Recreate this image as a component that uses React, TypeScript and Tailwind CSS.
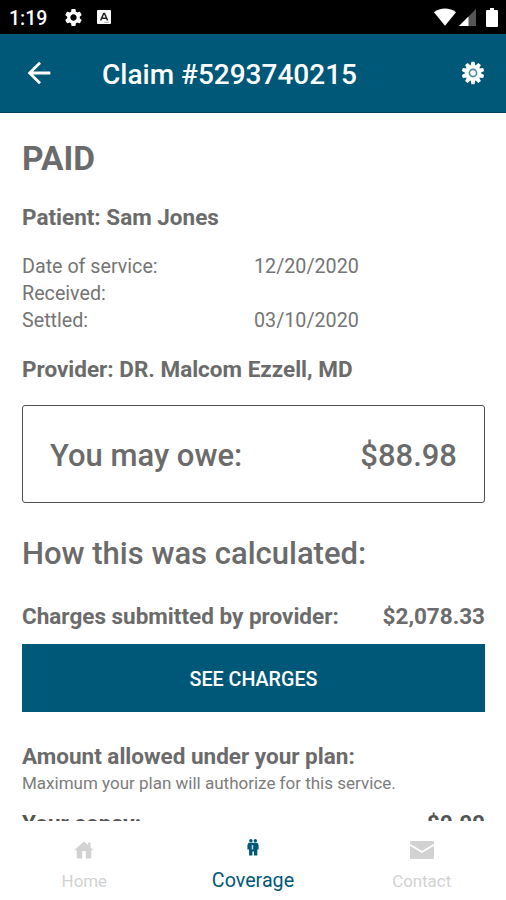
import React from 'react';
import { MdSettings, MdArrowBack } from 'react-icons/md';

const dates = [
  { id: 1, label: 'Date of service:', value: '12/20/2020' },
  { id: 2, label: 'Received:', value: '' },
  { id: 3, label: 'Settled:', value: '03/10/2020' },
];

const cogTeeth = [0, 36, 72, 108, 144, 180, 216, 252, 288, 324];

const StatusBar = () => (
  <div className="flex h-[34px] shrink-0 items-center bg-black pl-[9px] pr-[8px] text-white">
    <span className="w-[54px] pt-[3px] text-[19.5px] font-medium leading-none">1:19</span>
    <MdSettings className="size-[21px]" />
    <svg className="ml-[13px] size-[14px]" viewBox="0 0 14 14">
      <rect width="14" height="14" rx="1" fill="#fff" />
      <path d="M3.6 10.5 6.7 3.5h.9l3 7M4.8 8.2h4.6" fill="none" stroke="#222" strokeWidth="1.5" />
      <path d="M7 12.3h5" stroke="#999" strokeWidth="0.8" />
    </svg>
    <svg className="ml-auto h-[18px] w-[22px]" viewBox="0 0 22 18">
      <path d="M0 4.2C6.2-.7 15.8-.7 22 4.2L11 17.8Z" fill="#fff" />
    </svg>
    <svg className="ml-[3px] size-[17px]" viewBox="0 0 17 17">
      <path d="M17 0v17H0Z" fill="#555" />
      <path d="M9.5 7.5V17H0Z" fill="#fff" />
    </svg>
    <svg className="ml-[10px] h-[19px] w-[12px]" viewBox="0 0 12 19">
      <path d="M4 0h4v2h3a1 1 0 0 1 1 1v15a1 1 0 0 1-1 1H1a1 1 0 0 1-1-1V3a1 1 0 0 1 1-1h3Z" fill="#fff" />
    </svg>
  </div>
);

const Header = () => (
  <header className="flex h-[79px] shrink-0 items-center border-b border-[#003f5c] bg-[#005878] pl-[22px] pr-[21px] text-white">
    <MdArrowBack className="size-[34px]" />
    <h1 className="ml-[46px] pt-[4px] text-[28px] font-medium leading-none">Claim #5293740215</h1>
    <svg className="ml-auto size-[24px]" viewBox="-12 -12 24 24">
      {cogTeeth.map((angle) => (
        <path key={angle} d="M-2.4-7-1.6-11.2h3.2L2.4-7Z" fill="#fff" transform={`rotate(${angle})`} />
      ))}
      <circle r="8" fill="#fff" />
      <circle r="3.6" fill="none" stroke="#4b879e" strokeWidth="1.6" />
    </svg>
  </header>
);

const ClaimDetails = () => (
  <main className="min-h-0 flex-1 overflow-hidden pl-[22px] pr-[21px] pt-[26px] text-[#6b6b6b]">
    <h2 className="text-[33.5px] font-bold leading-[40px]">PAID</h2>
    <p className="mt-[24px] text-[22.5px] font-bold leading-[28px]">Patient: Sam Jones</p>
    <dl className="mt-[22px] text-[19.7px] leading-[27px] text-[#757575]">
      {dates.map((row) => (
        <div key={row.id} className="flex">
          <dt className="w-[232px]">{row.label}</dt>
          <dd>{row.value}</dd>
        </div>
      ))}
    </dl>
    <p className="mt-[21px] text-[22.5px] font-bold leading-[28px]">Provider: DR. Malcom Ezzell, MD</p>

    <div className="mt-[22px] flex h-[98px] items-center justify-between rounded-[3px] border-[1.5px] border-[#505050] px-[27px] pt-[4px] text-[31px] font-medium">
      <span>You may owe:</span>
      <span>$88.98</span>
    </div>

    <h3 className="mt-[32px] text-[31px] font-medium leading-[38px]">How this was calculated:</h3>
    <div className="mt-[29px] flex justify-between text-[22.5px] font-bold leading-[28px]">
      <span>Charges submitted by provider:</span>
      <span>$2,078.33</span>
    </div>
    <button className="mt-[14px] block h-[68px] w-full bg-[#005878] pt-[3px] text-[19.7px] font-medium text-white">
      SEE CHARGES
    </button>

    <p className="mt-[30px] text-[22.5px] font-bold leading-[28px]">Amount allowed under your plan:</p>
    <p className="text-[17px] leading-[26px] text-[#7c7c7c]">Maximum your plan will authorize for this service.</p>
    <div className="mt-[13px] flex justify-between text-[22.5px] font-bold leading-[28px] text-[#555]">
      <span>Your copay:</span>
      <span>$0.00</span>
    </div>
  </main>
);

const BottomNav = () => (
  <nav className="grid h-[79px] shrink-0 grid-cols-3 bg-white text-[#d2d2d2]">
    <div className="flex flex-col items-center pt-[20px]">
      <svg className="h-[18px] w-[18px]" viewBox="0 0 18 18" fill="currentColor">
        <path d="M9 .5 0 8.500l1.200 1.300L9 3l7.800 6.800L18 8.500l-2.400-2.100V1.500h-2.400v2.800Z" />
        <path d="M9 2.500 1.800 8.800V17.500h5.400V10h3.600v7.500h5.400V8.800Z" />
      </svg>
      <span className="mt-[10px] text-[16.9px] leading-[24px]">Home</span>
    </div>
    <div className="flex flex-col items-center pt-[18px] text-[#005878]">
      <svg className="h-[18px] w-[12px]" viewBox="0 0 12 18" fill="currentColor">
        <circle cx="3.9" cy="1.8" r="1.7" />
        <circle cx="8.3" cy="1.8" r="1.7" />
        <path d="M1.6 3.800h8.800L11.600 6v4.500H10.300V16.500H7v-4H5.400v4H2.100V10.500H.4V6Z" />
        <path d="M4.700 6h1.500v4.500H4.700Z" fill="#b8d4df" />
      </svg>
      <span className="mt-[11px] text-[19.7px] leading-[26px]">Coverage</span>
    </div>
    <div className="flex flex-col items-center pt-[20px]">
      <svg className="h-[18px] w-[24px]" viewBox="0 0 24 18">
        <rect width="24" height="18" rx="1" fill="currentColor" />
        <path d="M0 3.7 12 11 24 3.7" fill="none" stroke="#fff" strokeWidth="1.8" />
      </svg>
      <span className="mt-[10px] text-[16.9px] leading-[24px]">Contact</span>
    </div>
  </nav>
);

const App = () => {
  return (
    <div className="flex h-[900px] w-[506px] flex-col overflow-hidden bg-white font-['Roboto',sans-serif]">
      <StatusBar />
      <Header />
      <ClaimDetails />
      <BottomNav />
    </div>
  );
};

export default App;
